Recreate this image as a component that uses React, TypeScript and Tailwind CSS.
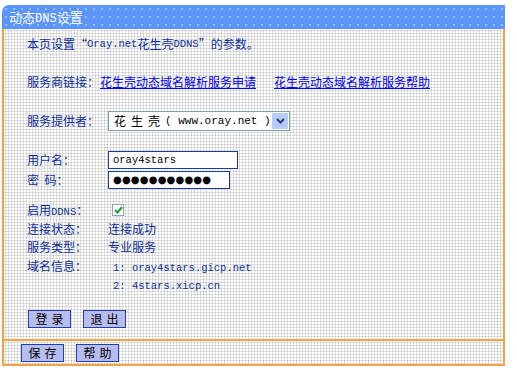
const dots = "bg-white bg-[radial-gradient(circle,#c4c4c4_0.9px,transparent_1.1px)] bg-[length:3px_3px]";

function M({ children }: { children: React.ReactNode }) {
  return <span className="font-['Liberation_Mono',monospace] text-[10.5px] leading-none">{children}</span>;
}

function Btn({ label }: { label: string }) {
  return (
    <button className="h-[18px] w-[43px] border border-[#1f3fae] bg-[#dfe2fb] bg-[radial-gradient(circle,#b8bdf0_0.8px,transparent_1px)] bg-[length:2px_2px] pl-[4px] text-[12px] leading-[16px] tracking-[4px] text-black">
      {label}
    </button>
  );
}

function Row({ label, children, className = "" }: { label: React.ReactNode; children?: React.ReactNode; className?: string }) {
  return (
    <div className={`flex h-[18px] items-center ${className}`}>
      <div className="w-[81px] shrink-0 whitespace-pre">{label}</div>
      <div className="flex items-center">{children}</div>
    </div>
  );
}

export default function App() {
  return (
    <div className="min-h-[383px] bg-white pl-[2px] pt-[5px] font-['Noto_Sans_CJK_SC',sans-serif]">
      <div className="w-[503px] text-[12px] leading-[18px] text-[#0d2f9e]">
        <div className="h-[24px] rounded-tl-[7px] bg-[#5c94fb] bg-[radial-gradient(circle,#8ec6ff_0.9px,transparent_1.2px)] bg-[length:8px_8px] pl-[7px] text-[13px] leading-[24px] text-white">
          动态<span className="font-['Liberation_Mono',monospace] text-[12px]">DNS</span>设置
        </div>
        <div className={`h-[310px] border-x-2 border-[#f5a243] pl-[23px] pt-[6px] ${dots}`}>
          <div className="flex h-[18px] items-center">
            本页设置“<M>Oray.net</M>花生壳<M>DDNS</M>”的参数。
          </div>
          <div className="mt-[20px] flex h-[18px] items-center">
            <span className="w-[73px]">服务商链接：</span>
            <a className="text-[#0000f0] underline">花生壳动态域名解析服务申请</a>
            <a className="ml-[18px] text-[#0000f0] underline">花生壳动态域名解析服务帮助</a>
          </div>
          <Row label="服务提供者：" className="mt-[20px] !h-[20px]">
            <div className="flex h-[20px] w-[182px] items-center border border-[#7d9fab] bg-white">
              <span className="flex flex-1 items-center overflow-hidden whitespace-pre pl-[5px] text-[12px] text-black">
                <span className="tracking-[5px]">花生壳</span>
                <span className="font-['Liberation_Mono',monospace] text-[11px] leading-none">( www.oray.net )</span>
              </span>
              <span className="mr-[1px] flex h-[16px] w-[16px] items-center justify-center bg-[#b9c9fa]">
                <svg width="9" height="6" viewBox="0 0 9 6">
                  <path d="M1 1 L4.5 4.5 L8 1" stroke="#2a3f6a" strokeWidth="2" fill="none" />
                </svg>
              </span>
            </div>
          </Row>
          <Row label="用户名：" className="mt-[20px]">
            <div className="flex h-[18px] w-[130px] items-center border border-[#1a3aa8] bg-white pl-[4px] text-black">
              <M>oray4stars</M>
            </div>
          </Row>
          <Row label="密  码：" className="mt-[2px]">
            <div className="flex h-[18px] w-[122px] items-center border border-[#1a3aa8] bg-white pl-[4px] font-['DejaVu_Sans',sans-serif] text-[10px] leading-none tracking-[0.2px] text-black">
              ●●●●●●●●●●●
            </div>
          </Row>
          <Row label={<>启用<M>DDNS</M>：</>} className="mt-[12px]">
            <span className="ml-[4px] flex h-[12px] w-[12px] items-center justify-center border border-[#8fa6b3] bg-white">
              <svg width="9" height="8" viewBox="0 0 9 8">
                <path d="M1 4 L3.5 6.5 L8 1" stroke="#1f9a2a" strokeWidth="2" fill="none" />
              </svg>
            </span>
          </Row>
          <Row label="连接状态：" className="mt-[1px]">连接成功</Row>
          <Row label="服务类型：">专业服务</Row>
          <Row label="域名信息：" className="mt-[1px]">
            <span className="pl-[5px]">
              <M>1: oray4stars.gicp.net</M>
            </span>
          </Row>
          <Row label="">
            <span className="pl-[5px]">
              <M>2: 4stars.xicp.cn</M>
            </span>
          </Row>
          <div className="mt-[17px] flex gap-[12px] pl-[1px]">
            <Btn label="登录" />
            <Btn label="退出" />
          </div>
        </div>
        <div className={`flex h-[27px] items-center gap-[12px] border-2 border-[#f5a243] pl-[17px] ${dots}`}>
          <Btn label="保存" />
          <Btn label="帮助" />
        </div>
      </div>
    </div>
  );
}
